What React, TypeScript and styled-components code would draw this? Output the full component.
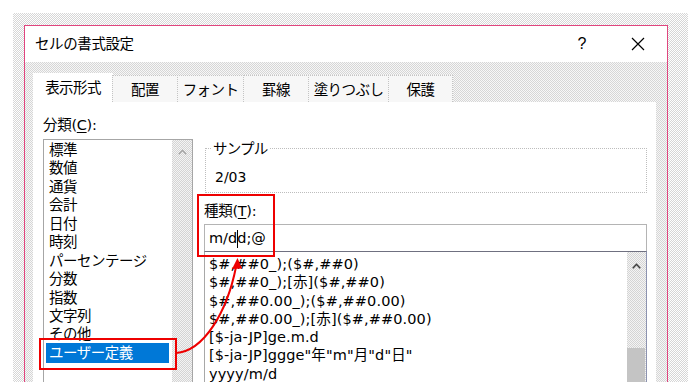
import React from 'react';
import styled, { createGlobalStyle, css } from 'styled-components';

const GlobalStyle = createGlobalStyle`
  html, body { margin: 0; padding: 0; background: #ffffff; }
  body {
    font-family: "DejaVu Sans", "Noto Sans CJK JP", sans-serif;
    color: #000;
    -webkit-font-smoothing: antialiased;
  }
  * { box-sizing: border-box; }
`;

const dither = (dot: string, base: string) => css`
  background-color: ${base};
  background-image: repeating-conic-gradient(${dot} 0 25%, ${base} 0 50%);
  background-size: 2px 2px;
`;

const Page = styled.div`
  position: relative;
  width: 698px;
  height: 392px;
  padding: 13px 0 0 13px;
  overflow: hidden;
`;

const Shadow = styled.div`
  width: 675px;
  height: 369px;
  padding: 12px 20px 0 11px;
  overflow: hidden;
  ${dither('#d6d6d6', '#ffffff')}
`;

const Dialog = styled.div`
  height: 100%;
  display: flex;
  flex-direction: column;
  border: 1px solid #e0457e;
  border-bottom: none;
  background: #f0f0f0;
`;

const TitleBar = styled.div`
  height: 36px;
  flex: none;
  display: flex;
  align-items: center;
  background: #ffffff;
  padding-left: 10px;
`;

const Title = styled.div`
  font-size: 14.5px;
  line-height: 18px;
  letter-spacing: -0.4px;
`;

const TitleControls = styled.div`
  margin-left: auto;
  display: flex;
  align-items: center;
  gap: 26px;
  padding-right: 14px;
`;

const TitleButton = styled.div`
  width: 30px;
  height: 20px;
  display: flex;
  align-items: center;
  justify-content: center;
  font-family: "Liberation Sans", sans-serif;
  font-size: 16px;
`;

const Body = styled.div`
  flex: 1;
  display: flex;
  flex-direction: column;
  padding: 11px 11px 0 8px;
  ${dither('#d6d6d6', '#f7f7f7')}
`;

const TabBar = styled.div`
  height: 29px;
  flex: none;
  display: flex;
  align-items: flex-end;
`;

const Tab = styled.div<{ $w: number; $active?: boolean }>`
  width: ${(p) => p.$w}px;
  height: ${(p) => (p.$active ? 29 : 27)}px;
  display: flex;
  align-items: center;
  justify-content: center;
  font-size: 14.5px;
  line-height: 18px;
  letter-spacing: -0.6px;
  padding-top: ${(p) => (p.$active ? 0 : 1)}px;
  ${(p) =>
    p.$active
      ? css`
          background: #ffffff;
        `
      : css`
          background: #f7f7f7;
          border: 1px dotted #c4c4c4;
          border-bottom: none;
          margin-left: -1px;
        `}
`;

const Panel = styled.div`
  flex: 1;
  background: #ffffff;
  display: grid;
  grid-template-columns: 150px 1fr;
  column-gap: 11px;
  padding: 13px 9px 0 10px;
  min-height: 0;
`;

const Column = styled.div`
  display: flex;
  flex-direction: column;
  min-height: 0;
`;

const FieldLabel = styled.div<{ $top?: number }>`
  height: 20px;
  line-height: 20px;
  font-size: 14.5px;
  margin-top: ${(p) => p.$top ?? 0}px;
  letter-spacing: -0.3px;
  u { text-underline-offset: 2px; }
`;

const CategoryList = styled.div`
  margin-top: 4px;
  flex: 1;
  display: flex;
  border: 1px solid #a6a6a6;
  border-bottom: none;
  min-height: 0;
`;

const CategoryItems = styled.div`
  flex: 1;
  padding-top: 1px;
  display: flex;
  flex-direction: column;
`;

const CategoryItem = styled.div<{ $selected?: boolean }>`
  height: 18.45px;
  line-height: 18.45px;
  margin: 0 3px 0 2px;
  padding-left: 3px;
  font-size: 14.5px;
  letter-spacing: -0.5px;
  white-space: nowrap;
  ${(p) =>
    p.$selected &&
    css`
      background: #0078d7;
      color: #ffffff;
      height: 20px;
      line-height: 20px;
      margin-top: -0.8px;
    `}
`;

const ScrollTrack = styled.div<{ $w: number }>`
  width: ${(p) => p.$w}px;
  flex: none;
  display: flex;
  flex-direction: column;
  ${dither('#d4d4d4', '#f4f4f4')}
`;

const ScrollArrow = styled.div<{ $h: number; $dark?: boolean }>`
  height: ${(p) => p.$h}px;
  flex: none;
  display: flex;
  align-items: center;
  justify-content: center;
  color: ${(p) => (p.$dark ? '#3c3c3c' : '#a8a8a8')};
`;

const ScrollThumb = styled.div<{ $top: number }>`
  margin-top: ${(p) => p.$top}px;
  margin-right: 1px;
  flex: 1;
  background-color: #c4c4c4;
  background-image: radial-gradient(#eeeeee 0.6px, transparent 0.7px);
  background-size: 6px 6px;
  background-position: 2px 2px;
`;

const SampleBox = styled.div`
  position: relative;
  margin: 33px 0 0 1px;
  height: 45px;
  border: 1px dotted #bdbdbd;
  padding: 19px 9px 0 9px;
`;

const SampleLegend = styled.div`
  position: absolute;
  top: -8px;
  left: 5px;
  padding: 0 2px;
  background: #ffffff;
  height: 16px;
  line-height: 16px;
  font-size: 14.5px;
  letter-spacing: -0.8px;
`;

const SampleValue = styled.div`
  font-size: 14px;
  line-height: 18px;
`;

const FormatInput = styled.div`
  margin-top: 3px;
  height: 27px;
  flex: none;
  border: 1px solid #b4b4b4;
  border-bottom: none;
  padding-left: 4px;
  display: flex;
  align-items: center;
  font-size: 14.5px;
  line-height: 18px;
`;

const Caret = styled.span`
  display: inline-block;
  width: 0;
  height: 18px;
  border-left: 1px solid #000;
  margin-right: -1px;
  vertical-align: middle;
`;

const TypeList = styled.div`
  flex: 1;
  display: flex;
  border-top: 1px solid #6f7080;
  border-left: 1px solid #a8a8a8;
  border-right: 1px solid #8c93b0;
  min-height: 0;
`;

const TypeItems = styled.div`
  flex: 1;
  padding: 3px 0 0 4px;
  display: flex;
  flex-direction: column;
`;

const TypeItem = styled.div`
  height: 18.3px;
  line-height: 18.3px;
  font-size: 14.5px;
  white-space: nowrap;
  letter-spacing: 0.1px;
`;

const Overlay = styled.svg`
  position: absolute;
  left: 0;
  top: 0;
  pointer-events: none;
`;

const tabs = [
  { label: '表示形式', w: 80, active: true },
  { label: '配置', w: 66 },
  { label: 'フォント', w: 67 },
  { label: '罫線', w: 66 },
  { label: '塗りつぶし', w: 81 },
  { label: '保護', w: 65 },
];

const categories = [
  '標準',
  '数値',
  '通貨',
  '会計',
  '日付',
  '時刻',
  'パーセンテージ',
  '分数',
  '指数',
  '文字列',
  'その他',
  'ユーザー定義',
];

const types = [
  '$#,##0_);($#,##0)',
  '$#,##0_);[赤]($#,##0)',
  '$#,##0.00_);($#,##0.00)',
  '$#,##0.00_);[赤]($#,##0.00)',
  '[$-ja-JP]ge.m.d',
  '[$-ja-JP]ggge"年"m"月"d"日"',
  'yyyy/m/d',
];

const UpChevron = () => (
  <svg width="9" height="6" viewBox="0 0 9 6">
    <path d="M0.8 5.2 L4.5 1.3 L8.2 5.2" fill="none" stroke="currentColor" strokeWidth="1.6" />
  </svg>
);

const CloseIcon = () => (
  <svg width="14" height="14" viewBox="0 0 14 14">
    <path d="M1 1 L13 13 M13 1 L1 13" stroke="#000" strokeWidth="1.2" />
  </svg>
);

export default function App() {
  return (
    <>
      <GlobalStyle />
      <Page>
        <Shadow>
          <Dialog>
            <TitleBar>
              <Title>セルの書式設定</Title>
              <TitleControls>
                <TitleButton>?</TitleButton>
                <TitleButton>
                  <CloseIcon />
                </TitleButton>
              </TitleControls>
            </TitleBar>
            <Body>
              <TabBar>
                {tabs.map((t) => (
                  <Tab key={t.label} $w={t.w} $active={t.active}>
                    {t.label}
                  </Tab>
                ))}
              </TabBar>
              <Panel>
                <Column>
                  <FieldLabel>
                    分類(<u>C</u>):
                  </FieldLabel>
                  <CategoryList>
                    <CategoryItems>
                      {categories.map((c) => (
                        <CategoryItem key={c} $selected={c === 'ユーザー定義'}>
                          {c}
                        </CategoryItem>
                      ))}
                    </CategoryItems>
                    <ScrollTrack $w={20}>
                      <ScrollArrow $h={24}>
                        <UpChevron />
                      </ScrollArrow>
                    </ScrollTrack>
                  </CategoryList>
                </Column>
                <Column>
                  <SampleBox>
                    <SampleLegend>サンプル</SampleLegend>
                    <SampleValue>2/03</SampleValue>
                  </SampleBox>
                  <FieldLabel $top={8}>
                    種類(<u>T</u>):
                  </FieldLabel>
                  <FormatInput>
                    <span>
                      m/d<Caret />d;@
                    </span>
                  </FormatInput>
                  <TypeList>
                    <TypeItems>
                      {types.map((t) => (
                        <TypeItem key={t}>{t}</TypeItem>
                      ))}
                    </TypeItems>
                    <ScrollTrack $w={19}>
                      <ScrollArrow $h={28} $dark>
                        <UpChevron />
                      </ScrollArrow>
                      <ScrollThumb $top={68} />
                    </ScrollTrack>
                  </TypeList>
                </Column>
              </Panel>
            </Body>
          </Dialog>
        </Shadow>
        <Overlay width="698" height="392" viewBox="0 0 698 392">
          <rect x="40" y="339" width="136" height="30" fill="none" stroke="#ee0000" strokeWidth="2" />
          <rect x="198" y="195" width="76" height="61" fill="none" stroke="#ee0000" strokeWidth="2" />
          <path d="M176 353 C204 351 227 312 236 267" fill="none" stroke="#ee0000" strokeWidth="2" />
          <polygon points="237.5,258 232,269 242,268.5" fill="#ee0000" />
        </Overlay>
      </Page>
    </>
  );
}
